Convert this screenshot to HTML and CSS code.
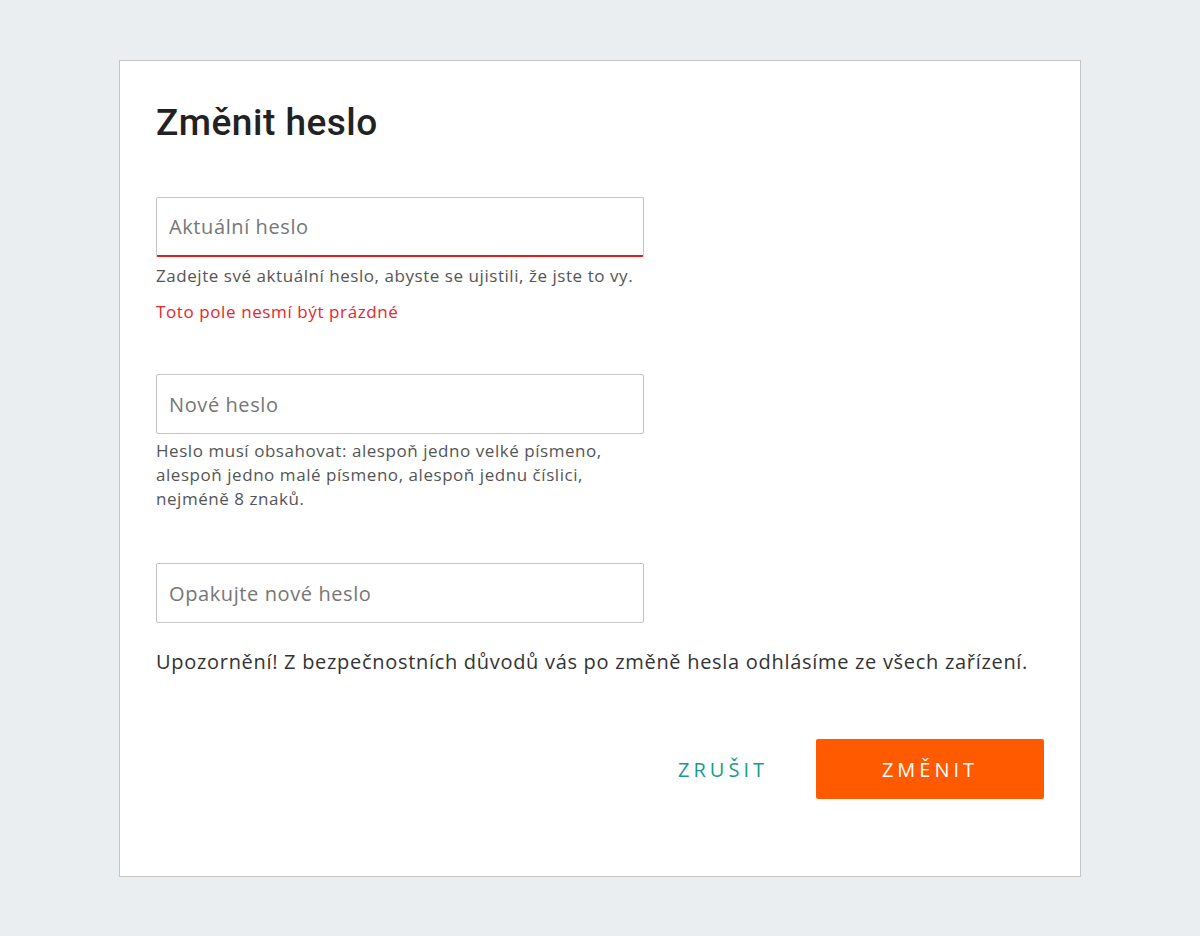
FILE: index.html
```html
<!DOCTYPE html>
<html lang="cs">
<head>
<meta charset="utf-8">
<title>Změnit heslo</title>
<link rel="stylesheet" href="styles.css">
</head>
<body>
<div class="card">
  <h1 class="title">Změnit heslo</h1>

  <div class="field field-first">
    <input class="input input-error" type="password" placeholder="Aktuální heslo">
    <p class="hint hint-first">Zadejte své aktuální heslo, abyste se ujistili, že jste to vy.</p>
    <p class="error">Toto pole nesmí být prázdné</p>
  </div>

  <div class="field field-gap">
    <input class="input" type="password" placeholder="Nové heslo">
    <p class="hint hint-second">Heslo musí obsahovat: alespoň jedno velké písmeno, alespoň jedno malé písmeno, alespoň jednu číslici, nejméně 8 znaků.</p>
  </div>

  <div class="field field-gap3">
    <input class="input" type="password" placeholder="Opakujte nové heslo">
  </div>

  <p class="warning">Upozornění! Z bezpečnostních důvodů vás po změně hesla odhlásíme ze všech zařízení.</p>

  <div class="actions">
    <button class="btn btn-cancel" type="button">Zrušit</button>
    <button class="btn btn-primary" type="button">Změnit</button>
  </div>
</div>
</body>
</html>
```

FILE: styles.css
```css
html, body {
  margin: 0;
  padding: 0;
}
body {
  background: #eaeef1;
  font-family: "Open Sans", "Liberation Sans", sans-serif;
  min-height: 936px;
}
.card {
  box-sizing: border-box;
  width: 962px;
  margin: 60px auto 0;
  background: #fff;
  border: 1px solid #c4c4c4;
  padding: 40px 36px 77px 36px;
}
.title {
  margin: 0;
  font-family: Roboto, "Liberation Sans", sans-serif;
  font-weight: 500;
  font-size: 37px;
  letter-spacing: 0.5px;
  line-height: 44px;
  color: #222;
}
.field {
  width: 488px;
}
.field-first {
  margin-top: 52px;
}
.field-gap {
  margin-top: 50px;
}
.field-gap3 {
  margin-top: 52px;
}
.input {
  display: block;
  box-sizing: border-box;
  width: 488px;
  height: 60px;
  margin: 0;
  padding: 0 12px;
  border: 1px solid #c4c4c4;
  border-radius: 2px;
  background: #fff;
  font-family: "Open Sans", "Liberation Sans", sans-serif;
  font-size: 20px;
  letter-spacing: 0.6px;
  color: #333;
  outline: none;
}
.input::placeholder {
  color: #767676;
  opacity: 1;
}
.input-error {
  border-bottom: 2px solid #e41e1e;
}
.hint {
  margin: 5px 0 0;
  font-size: 17px;
  letter-spacing: 0.55px;
  line-height: 24px;
  color: #555;
}
.hint-first {
  margin-top: 7px;
}
.error {
  margin: 12px 0 0;
  font-size: 17px;
  letter-spacing: 0.6px;
  line-height: 24px;
  color: #e8262b;
}
.warning {
  margin: 25px 0 0;
  font-size: 20px;
  letter-spacing: 0.7px;
  line-height: 28px;
  color: #333;
}
.actions {
  display: flex;
  justify-content: flex-end;
  align-items: center;
  margin-top: 63px;
  gap: 28px;
}
.btn {
  font-family: "Open Sans", "Liberation Sans", sans-serif;
  font-size: 20px;
  letter-spacing: 4px;
  text-transform: uppercase;
  height: 60px;
  border: none;
  border-radius: 2px;
  cursor: pointer;
}
.btn-cancel {
  background: transparent;
  color: #179b8c;
  padding: 0 20px;
}
.btn-primary {
  width: 228px;
  background: #ff5a00;
  color: #fff;
}
```
